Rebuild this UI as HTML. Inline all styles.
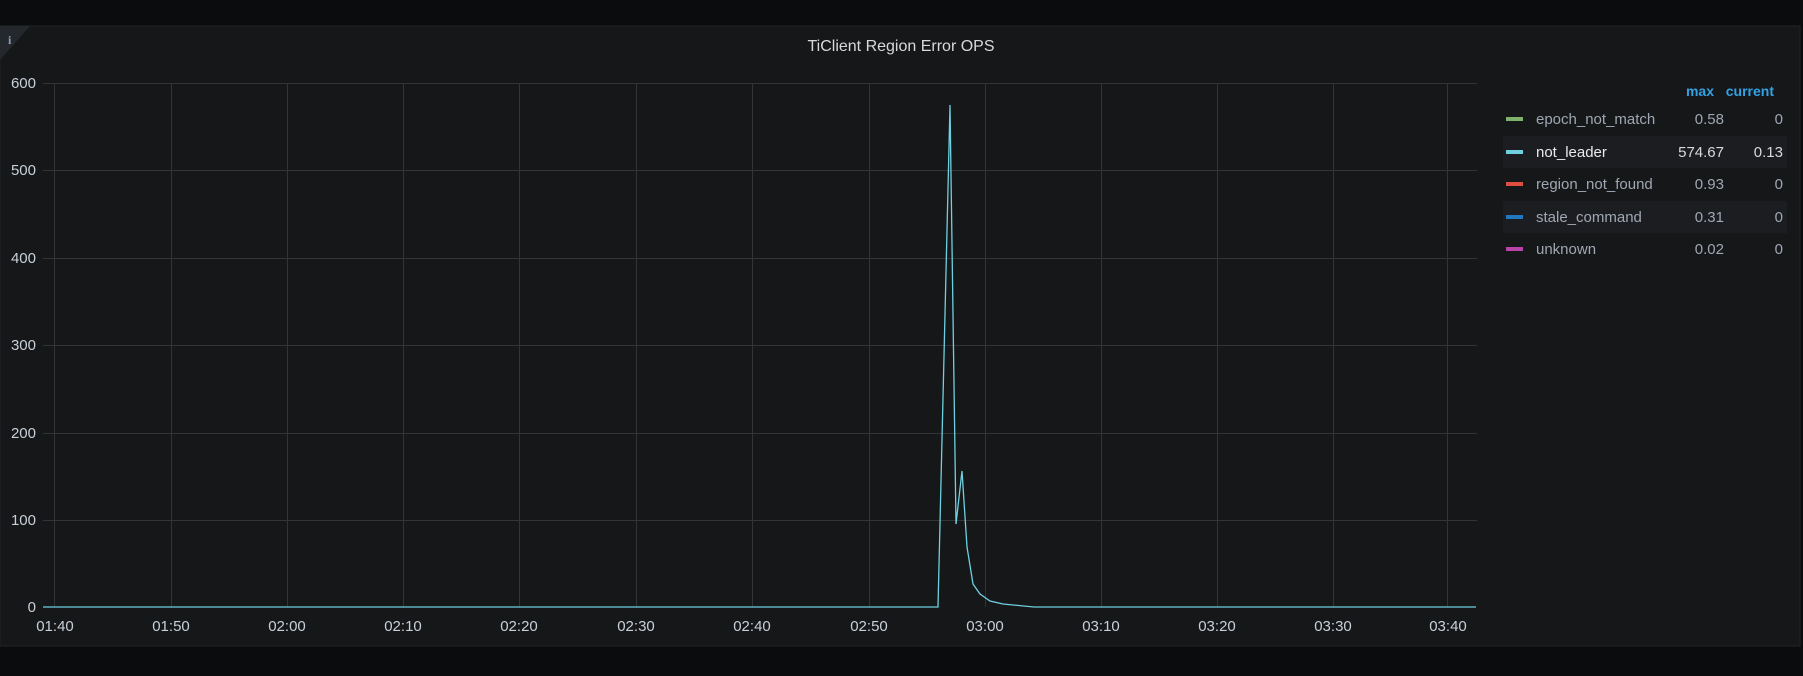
<!DOCTYPE html>
<html><head><meta charset="utf-8"><style>
html,body{margin:0;padding:0;background:#0b0c0e;width:1803px;height:676px;overflow:hidden;font-family:"Liberation Sans",sans-serif}
</style></head><body>
<svg width="1803" height="676" xmlns="http://www.w3.org/2000/svg" style="position:absolute;left:0;top:0">
<rect x="0" y="0" width="1803" height="676" fill="#0b0c0e"/>
<rect x="0" y="26" width="1800" height="620" fill="#161719" stroke="#222327" stroke-width="1"/>
<polygon points="0,26 30,26 0,60" fill="#24272c"/>
<text x="8" y="44" font-size="12" font-weight="bold" fill="#8aa0b8" font-family="Liberation Serif,serif">i</text>
<text x="901" y="51" font-size="16" fill="#d8d9da" text-anchor="middle">TiClient Region Error OPS</text>
<g stroke="#333438" stroke-width="1">
<line x1="43" y1="83.5" x2="1477" y2="83.5"/>
<line x1="43" y1="170.5" x2="1477" y2="170.5"/>
<line x1="43" y1="258.5" x2="1477" y2="258.5"/>
<line x1="43" y1="345.5" x2="1477" y2="345.5"/>
<line x1="43" y1="433.5" x2="1477" y2="433.5"/>
<line x1="43" y1="520.5" x2="1477" y2="520.5"/>
<line x1="54.5" y1="83" x2="54.5" y2="607"/>
<line x1="171.5" y1="83" x2="171.5" y2="607"/>
<line x1="287.5" y1="83" x2="287.5" y2="607"/>
<line x1="403.5" y1="83" x2="403.5" y2="607"/>
<line x1="519.5" y1="83" x2="519.5" y2="607"/>
<line x1="636.5" y1="83" x2="636.5" y2="607"/>
<line x1="752.5" y1="83" x2="752.5" y2="607"/>
<line x1="869.5" y1="83" x2="869.5" y2="607"/>
<line x1="985.5" y1="83" x2="985.5" y2="607"/>
<line x1="1101.5" y1="83" x2="1101.5" y2="607"/>
<line x1="1217.5" y1="83" x2="1217.5" y2="607"/>
<line x1="1333.5" y1="83" x2="1333.5" y2="607"/>
<line x1="1447.5" y1="83" x2="1447.5" y2="607"/>
</g>
<g font-size="15" fill="#c7d0d9" text-anchor="end">
<text x="36" y="88">600</text><text x="36" y="175">500</text><text x="36" y="263">400</text>
<text x="36" y="350">300</text><text x="36" y="438">200</text><text x="36" y="525">100</text><text x="36" y="612">0</text>
</g>
<g font-size="15" fill="#c7d0d9" text-anchor="middle">
<text x="55" y="631">01:40</text><text x="171" y="631">01:50</text><text x="287" y="631">02:00</text>
<text x="403" y="631">02:10</text><text x="519" y="631">02:20</text><text x="636" y="631">02:30</text>
<text x="752" y="631">02:40</text><text x="869" y="631">02:50</text><text x="985" y="631">03:00</text>
<text x="1101" y="631">03:10</text><text x="1217" y="631">03:20</text><text x="1333" y="631">03:30</text>
<text x="1448" y="631">03:40</text>
</g>
<polyline fill="none" stroke="#6ed0e0" stroke-width="1.3" points="43,607 938,607 950,105 956,524 962,471 967,547 973,584 980,594 990,601 1003,604 1034,607 1476,607"/>
<text x="1714" y="96" font-size="14" font-weight="bold" fill="#33a2e5" text-anchor="end">max</text>
<text x="1774" y="96" font-size="14" font-weight="bold" fill="#33a2e5" text-anchor="end">current</text>
<rect x="1503" y="136" width="284" height="32" fill="#1c1d21"/>
<rect x="1503" y="201" width="284" height="32" fill="#1c1d21"/>
<g font-size="15">
<rect x="1506" y="117" width="17" height="4" fill="#7eb26d"/>
<text x="1536" y="124" fill="#9fa7b3">epoch_not_match</text><text x="1724" y="124" fill="#9fa7b3" text-anchor="end">0.58</text><text x="1783" y="124" fill="#9fa7b3" text-anchor="end">0</text>
<rect x="1506" y="150" width="17" height="4" fill="#6ed0e0"/>
<text x="1536" y="157" fill="#e8e9ea">not_leader</text><text x="1724" y="157" fill="#d8d9da" text-anchor="end">574.67</text><text x="1783" y="157" fill="#d8d9da" text-anchor="end">0.13</text>
<rect x="1506" y="182" width="17" height="4" fill="#e24d42"/>
<text x="1536" y="189" fill="#9fa7b3">region_not_found</text><text x="1724" y="189" fill="#9fa7b3" text-anchor="end">0.93</text><text x="1783" y="189" fill="#9fa7b3" text-anchor="end">0</text>
<rect x="1506" y="215" width="17" height="4" fill="#1f78c1"/>
<text x="1536" y="222" fill="#9fa7b3">stale_command</text><text x="1724" y="222" fill="#9fa7b3" text-anchor="end">0.31</text><text x="1783" y="222" fill="#9fa7b3" text-anchor="end">0</text>
<rect x="1506" y="247" width="17" height="4" fill="#ba43a9"/>
<text x="1536" y="254" fill="#9fa7b3">unknown</text><text x="1724" y="254" fill="#9fa7b3" text-anchor="end">0.02</text><text x="1783" y="254" fill="#9fa7b3" text-anchor="end">0</text>
</g>
</svg>
</body></html>
